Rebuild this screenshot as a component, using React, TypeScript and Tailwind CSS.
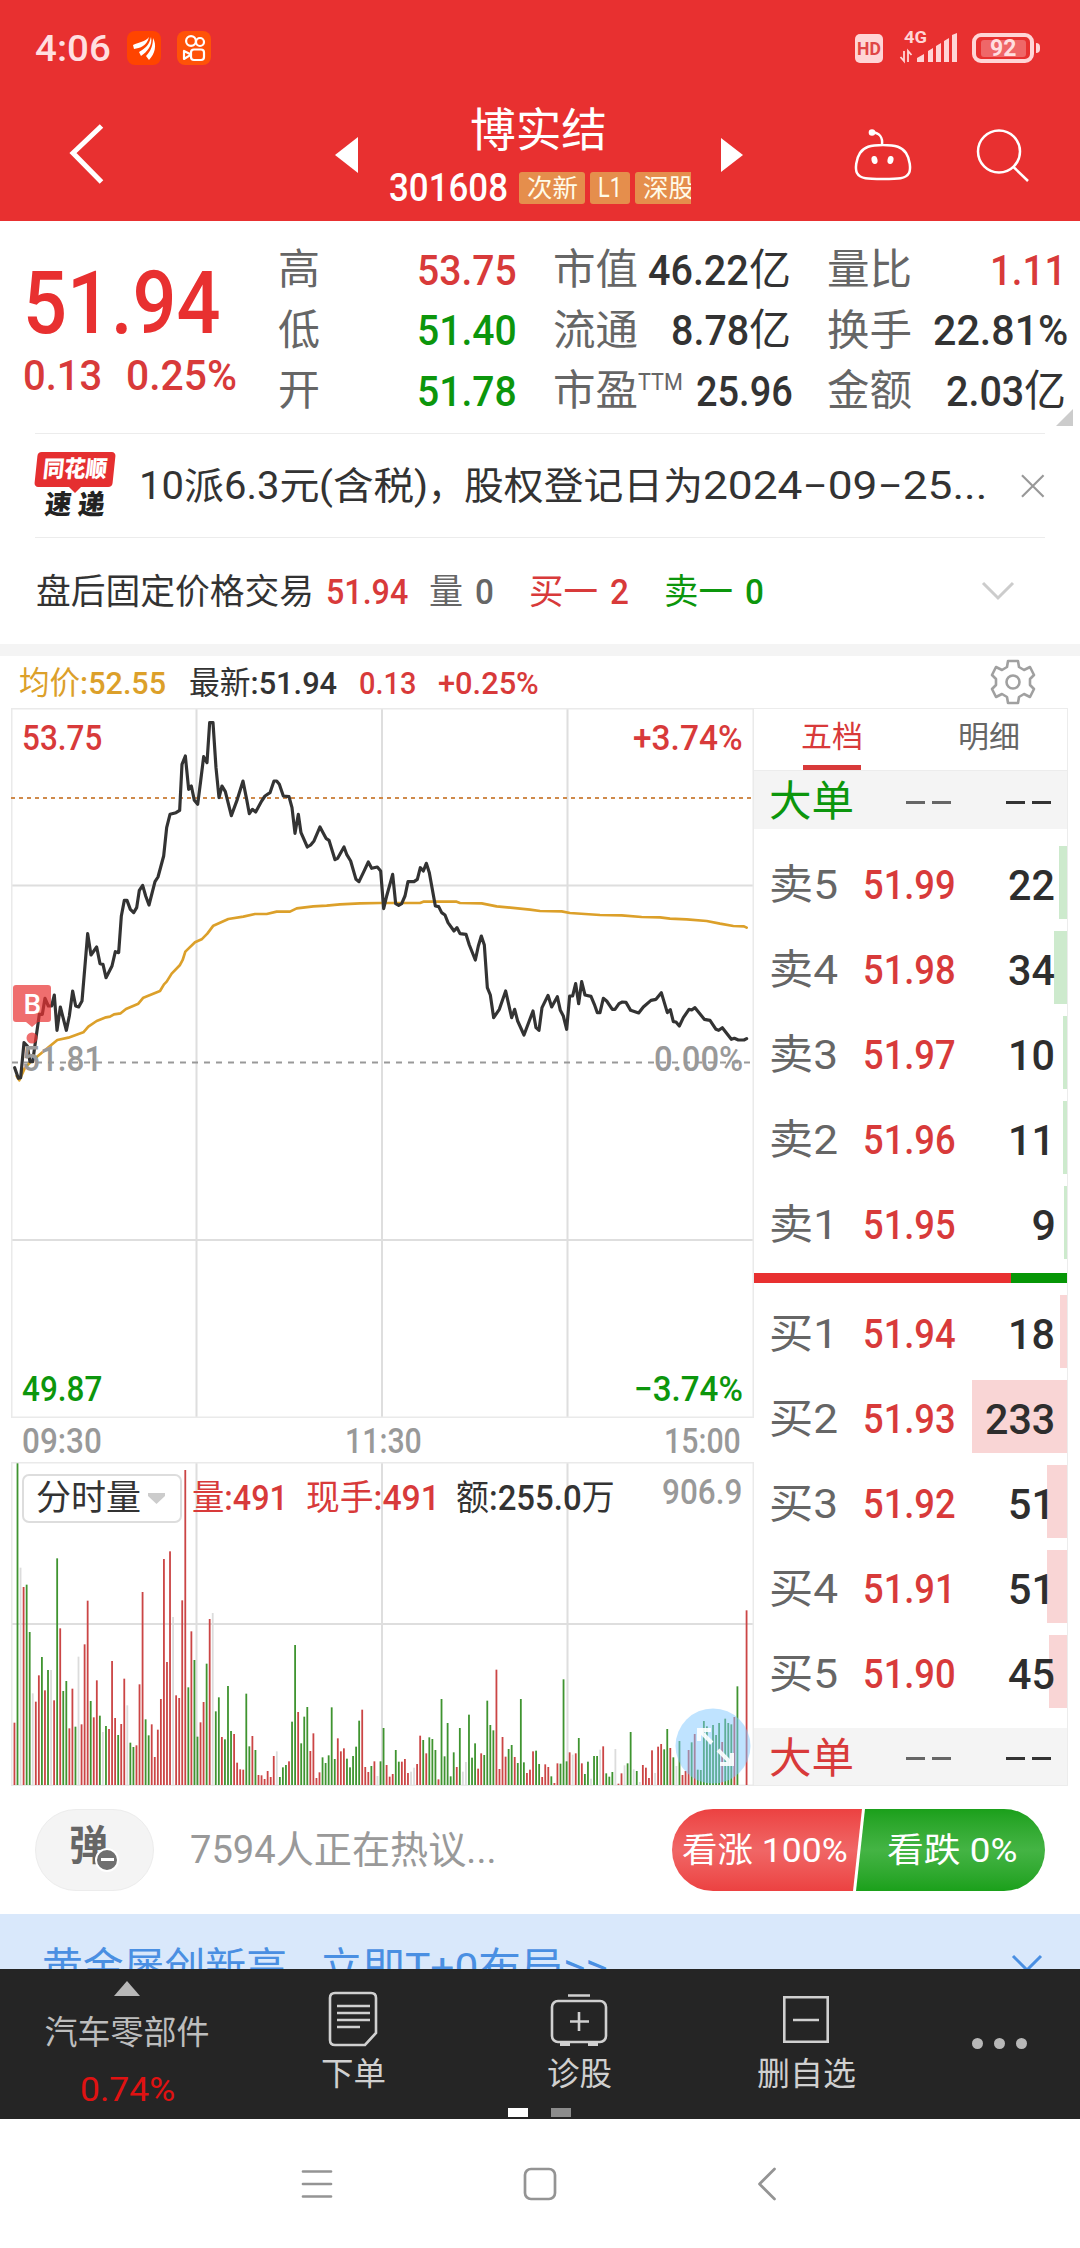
import { useLayoutEffect, useRef, type ReactNode } from 'react';

/* Text that is condensed or stretched to the width of its own box. */
function Fit({ className, children }: { className: string; children: ReactNode }) {
  const outer = useRef<HTMLSpanElement>(null);
  const inner = useRef<HTMLSpanElement>(null);
  useLayoutEffect(() => {
    if (!outer.current || !inner.current) return;
    inner.current.style.transform = `scaleX(${outer.current.clientWidth / inner.current.offsetWidth})`;
  }, []);
  return (
    <span ref={outer} className={`block shrink-0 whitespace-nowrap leading-none ${className}`}>
      <span ref={inner} className="inline-block origin-left">
        {children}
      </span>
    </span>
  );
}

function StatusBar() {
  return (
    <div className="flex h-24 items-center text-[#ffdfe0]">
      <Fit className="ml-[35px] w-[76px] text-[37px] font-medium">4:06</Fit>
      <svg className="ml-[16px]" width="34" height="34" viewBox="0 0 34 34">
        <rect width="34" height="34" rx="8" fill="#ff4400" />
        <g fill="#fff">
          <path d="M6 14C12 11 18 11 22 6C20 15 13 17 7 18Z" />
          <path d="M12 21C19 17 22 14 24 6C26 14 20 21 14 25Z" />
          <path d="M19 25C24 20 26 14 26 7C30 14 28 23 22 29Z" />
        </g>
      </svg>
      <svg className="ml-[16px]" width="34" height="34" viewBox="0 0 34 34" fill="none" stroke="#fff" strokeWidth="2.2">
        <rect width="34" height="34" rx="8" fill="#ff5208" stroke="none" />
        <circle cx="14" cy="10" r="4.9" />
        <circle cx="23" cy="11" r="4" />
        <rect x="14" y="18.5" width="13" height="10.5" rx="3" />
        <path d="M14 23.6L7 20V28Z" strokeLinejoin="round" />
      </svg>
      <span className="ml-[644px] flex h-[29px] w-7 items-center justify-center rounded-[5px] bg-[#ffd5d6]">
        <Fit className="w-6 text-[19px] font-bold text-[#e04545]">HD</Fit>
      </span>
      <svg className="ml-[16px] -mt-1" width="60" height="38" viewBox="0 -4 60 38" fill="#ffd5d6">
        <text x="5" y="12" fontFamily="Roboto" fontSize="16" fontWeight="700" textLength="23" lengthAdjust="spacingAndGlyphs">4G</text>
        <path d="M18 31V27L25 23V31ZM29 31V20L34 17V31ZM37 31V15L42 12V31ZM45 31V10L50 7V31ZM53 31V4L58 2V31Z" />
        <path d="M5 20V30L1.500 26M9 31V20L12.500 24" fill="none" stroke="#ffd5d6" strokeWidth="1.800" />
      </svg>
      <span className="ml-[13px] flex h-[30px] w-[62px] items-center justify-center rounded-[9px] border-4 border-[#ffd5d6]">
        <span className="flex h-[17px] w-[45px] items-center justify-center rounded-[3px] bg-[#ef6768]">
          <Fit className="w-[26px] text-[23px] font-bold">92</Fit>
        </span>
      </span>
      <span className="ml-[2px] h-[10px] w-1 rounded-r bg-[#ffd5d6]" />
    </div>
  );
}

function Header() {
  return (
    <header className="h-[221px] shrink-0 bg-[#e83030] text-white">
      <StatusBar />
      <div className="flex h-[114px] items-center">
        <svg className="ml-[68px]" width="38" height="62" viewBox="0 0 38 62" fill="none" stroke="#fff" strokeWidth="5">
          <path d="M33.500 4L5 31L33.500 60" />
        </svg>
        <svg className="ml-[229px] mt-1" width="23" height="36" viewBox="0 0 23 36">
          <path d="M23 0V36L0 18Z" fill="#fff" />
        </svg>
        <div className="ml-[31px] flex h-[122px] w-[302px] flex-col self-start">
          <div className="flex h-16 items-center justify-center pr-[3px] pt-[3px]">
            <Fit className="w-[137px] text-[46px]">博实结</Fit>
          </div>
          <div className="flex h-[56px] items-center overflow-hidden text-[25px] text-[#fffbe8]">
            <Fit className="w-[119px] text-[39px] font-medium text-white">301608</Fit>
            <span className="ml-[11px] flex h-8 w-[66px] shrink-0 items-center justify-center rounded-[3px] bg-[#e58e4c]">
              <Fit className="w-[51px]">次新</Fit>
            </span>
            <span className="ml-[5px] flex h-8 w-10 shrink-0 items-center justify-center rounded-[3px] bg-[#e58e4c]">
              <Fit className="w-[24px] text-[28px]">L1</Fit>
            </span>
            <span className="ml-[5px] flex h-8 w-[56px] shrink-0 items-center overflow-hidden rounded-l-[3px] bg-[#e58e4c] pl-[8px]">
              <Fit className="w-[51px]">深股</Fit>
            </span>
          </div>
        </div>
        <svg className="ml-[30px] mt-1" width="22" height="34" viewBox="0 0 22 34">
          <path d="M0 0V34L22 17Z" fill="#fff" />
        </svg>
        <svg className="ml-[110px] mt-1" width="60" height="56" viewBox="0 0 60 56" fill="none" stroke="#fff" strokeWidth="2.500">
          <path d="M30 18C43 18 49 20 53 26C57 32 58 42 56 46C53 52 45 52 30 52C15 52 7 52 4 46C2 42 3 32 7 26C11 20 17 18 30 18ZM29 18C30 9 26 6 19 5" />
          <circle cx="19" cy="5.500" r="3.300" fill="#fff" stroke="none" />
          <ellipse cx="21.500" cy="33" rx="3" ry="4" fill="#fff" stroke="none" transform="rotate(-12 21.500 33)" />
          <ellipse cx="37.500" cy="33" rx="3" ry="4" fill="#fff" stroke="none" transform="rotate(12 37.500 33)" />
        </svg>
        <svg className="ml-[63px] mt-1" width="54" height="56" viewBox="0 0 54 56" fill="none" stroke="#fff" strokeWidth="2.500">
          <circle cx="23" cy="24.500" r="21" />
          <path d="M37.500 40L52 54" />
        </svg>
      </div>
    </header>
  );
}

const ROW = 'flex h-[60.5px] items-center justify-between text-[43px]';
const LABEL2 = 'w-[85px] text-[42px] text-[#666]';

function Quote() {
  return (
    <section className="flex h-[212px] shrink-0 text-[#d83a3a]">
      <div className="w-[278px] shrink-0 pl-[23px] pt-[35px]">
        <div className="flex h-[94px] items-center">
          <Fit className="w-[198px] text-[88px] font-medium text-[#e83030]">51.94</Fit>
        </div>
        <div className="flex h-[50px] items-center gap-6 text-[43px]">
          <Fit className="w-[79px] font-medium">0.13</Fit>
          <Fit className="w-[111px] font-medium">0.25%</Fit>
        </div>
      </div>
      <div className="w-[239px] shrink-0 pt-[19px]">
        <div className={ROW}>
          <Fit className="w-[42px] text-[42px] text-[#666]">高</Fit>
          <Fit className="w-[100px] font-medium">53.75</Fit>
        </div>
        <div className={`${ROW} text-[#0c960c]`}>
          <Fit className="w-[42px] text-[42px] text-[#666]">低</Fit>
          <Fit className="w-[100px] font-medium">51.40</Fit>
        </div>
        <div className={`${ROW} text-[#0c960c]`}>
          <Fit className="w-[42px] text-[42px] text-[#666]">开</Fit>
          <Fit className="w-[100px] font-medium">51.78</Fit>
        </div>
      </div>
      <div className="ml-[36px] w-[240px] shrink-0 pt-[19px] text-[#333]">
        <div className={ROW}>
          <Fit className={LABEL2}>市值</Fit>
          <span className="flex pr-[2px]">
            <Fit className="w-[101px] font-medium">46.22</Fit>
            <Fit className="w-[42px]">亿</Fit>
          </span>
        </div>
        <div className={ROW}>
          <Fit className={LABEL2}>流通</Fit>
          <span className="flex pr-[2px]">
            <Fit className="w-[78px] font-medium">8.78</Fit>
            <Fit className="w-[42px]">亿</Fit>
          </span>
        </div>
        <div className={ROW}>
          <span className="flex">
            <Fit className={LABEL2}>市盈</Fit>
            <Fit className="w-[45px] text-[24px] text-[#666]">TTM</Fit>
          </span>
          <Fit className="w-[97px] font-medium">25.96</Fit>
        </div>
      </div>
      <div className="ml-[34px] w-[241px] shrink-0 pt-[19px] text-[#333]">
        <div className={ROW}>
          <Fit className={LABEL2}>量比</Fit>
          <Fit className="mr-[2px] w-[76px] font-medium text-[#d83a3a]">1.11</Fit>
        </div>
        <div className={ROW}>
          <Fit className={LABEL2}>换手</Fit>
          <Fit className="w-[135px] font-medium">22.81%</Fit>
        </div>
        <div className={ROW}>
          <Fit className={LABEL2}>金额</Fit>
          <span className="flex pr-[2px]">
            <Fit className="w-[78px] font-medium">2.03</Fit>
            <Fit className="w-[42px]">亿</Fit>
          </span>
        </div>
      </div>
      <svg className="-ml-[12px] mb-[7px] shrink-0 self-end" width="17" height="17" viewBox="0 0 17 17">
        <path d="M17 0V17H0Z" fill="#ccc" />
      </svg>
    </section>
  );
}

function Notice() {
  return (
    <section className="mx-[35px] flex h-[105px] shrink-0 items-center border-y border-[#ececec]">
      <div className="flex h-[68px] w-[82px] flex-col items-center">
        <div className="flex h-[35px] w-[78px] -skew-x-6 items-center justify-center rounded-[4px] bg-[#e52f30]">
          <Fit className="w-[64px] text-[23px] font-black text-white">同花顺</Fit>
        </div>
        <svg width="12" height="6" viewBox="0 0 12 6">
          <path d="M0 0H12L6 6Z" fill="#e52f30" />
        </svg>
        <div className="-mt-[1px] -skew-x-6">
          <Fit className="w-[60px] text-[27px] font-black text-[#222]">速 递</Fit>
        </div>
      </div>
      <div className="flex text-[38px] text-[#333]">
        <Fit className="ml-[24px] w-[180px]">10派6.3元</Fit>
        <Fit className="w-[109px]">(含税)</Fit>
        <Fit className="w-[36px]">，</Fit>
        <Fit className="w-[239px]">股权登记日为</Fit>
        <Fit className="w-[284px]">2024−09−25...</Fit>
      </div>
      <svg className="ml-[34px]" width="24" height="24" viewBox="0 0 24 24" stroke="#999" strokeWidth="2.200">
        <path d="M1 1L23 23M23 1L1 23" />
      </svg>
    </section>
  );
}

function FixedPrice() {
  return (
    <section className="flex h-[106px] shrink-0 items-center pl-[36px] pt-[2px] text-[35px] text-[#333]">
      <Fit className="w-[278px]">盘后固定价格交易</Fit>
      <Fit className="ml-[12px] w-[82px] font-medium text-[#d83a3a]">51.94</Fit>
      <Fit className="ml-[21px] w-[34px] text-[#666]">量</Fit>
      <Fit className="ml-[12px] w-[19px] font-medium text-[#666]">0</Fit>
      <Fit className="ml-[35px] w-[69px] text-[#d83a3a]">买一</Fit>
      <Fit className="ml-[12px] w-[19px] font-medium text-[#d83a3a]">2</Fit>
      <Fit className="ml-[35px] w-[69px] text-[#0c960c]">卖一</Fit>
      <Fit className="ml-[12px] w-[19px] font-medium text-[#0c960c]">0</Fit>
      <svg className="-mt-[2px] ml-[217px]" width="34" height="20" viewBox="0 0 34 20" fill="none" stroke="#ccc" strokeWidth="3">
        <path d="M2 2L17 17L32 2" />
      </svg>
    </section>
  );
}

function InfoRow() {
  return (
    <section className="flex h-[52px] shrink-0 items-center pl-[19px] pt-[2px] text-[32px] text-[#333]">
      <Fit className="w-[147px] text-[#dca02a]">
        均价<span className="font-medium">:52.55</span>
      </Fit>
      <Fit className="ml-[23px] w-[148px]">
        最新<span className="font-medium">:51.94</span>
      </Fit>
      <Fit className="ml-[22px] w-[57px] font-medium text-[#d83a3a]">0.13</Fit>
      <Fit className="ml-[22px] w-[101px] font-medium text-[#d83a3a]">+0.25%</Fit>
      <svg className="-mt-[2px] ml-[451px]" width="46" height="46" viewBox="0 0 46 46" fill="none" stroke="#a0a0a0" strokeWidth="2.600" strokeLinejoin="round">
        <path d="M18 2H28L29 8L34 11L40 8L44 16L40 20V26L44 30L40 38L34 35L29 38L28 44H18L17 38L12 35L6 38L2 30L6 26V20L2 16L6 8L12 11L17 8Z" />
        <circle cx="23" cy="23" r="6.500" />
      </svg>
    </section>
  );
}

/* Chart points are in thirds of a pixel. */
const PRICE_A =
  '44,1280 55,1312 62,1310 72,1205 82,1215 90,1262 98,1262 108,1190 118,1120 127,1120 135,1072 145,1095 155,1095 163,1062 171,1168 181,1098 199,1168 208,1125 218,1050 227,1095 236,1098 246,1080 254,985 263,878 273,942 290,918 300,968 309,970 318,1010 336,975 346,932 356,935 364,825 373,778 381,778 391,805 401,815 410,800 418,748 428,733 437,765 447,792 465,722 474,708 491,645 500,560 510,520 528,515 539,508 546,370 556,345 566,445 574,435 583,478 593,490 602,420 611,347 621,365 629,245 639,245 648,380 657,470 666,435 676,452 694,524 712,475 729,420 740,475 748,518 757,505 767,513 785,480 795,465 810,455 822,420 830,420 838,430 850,465 867,467 876,500 885,577 895,520 903,575 922,618 932,612 942,600 960,558 978,592 987,598 1005,656 1013,652 1032,618 1040,640 1052,660 1068,715 1077,722 1090,695 1105,663';
const PRICE_B =
  '5,682 22,678 32,690 41,803 50,765 68,700 77,788 86,793 95,788 105,765 114,722 132,722 142,715 151,680 160,690 169,667 178,695 196,795 206,797 215,815 225,822 234,845 252,870 261,860 270,878 288,880 298,912 316,957 325,915 334,885 343,912 352,1040 361,1062 371,1130 388,1105 407,1050 425,1130 434,1105 443,1140 462,1182 489,1110 498,1160 507,1168 516,1100 534,1063 545,1098 562,1067 571,1108 580,1125 590,1165 599,1065 608,1065 617,1028 626,1088 635,1022 645,1062 663,1066 673,1090 682,1115 690,1115 700,1072 710,1080 727,1105 735,1105 747,1088 757,1083 768,1084 782,1108 806,1116 820,1098 843,1078 858,1075 874,1055 892,1115 901,1106 910,1142 918,1143 928,1155 940,1130 957,1105 965,1107 975,1100 1003,1135 1020,1138 1038,1165 1046,1168 1057,1160 1084,1195 1093,1192 1105,1197 1122,1197 1130,1193';
const AVG_A =
  '50,1305 58,1318 75,1280 95,1260 120,1240 150,1215 172,1197 205,1190 250,1174 265,1157 290,1140 318,1129 330,1127 342,1120 362,1117 378,1104 415,1088 430,1070 480,1050 492,1030 500,1022 515,998 540,972 548,957 556,932 585,904 605,895 622,878 640,854 685,834 730,827 765,819 800,819 830,812 870,812 890,802 940,796 980,794 1020,790 1080,787';
const AVG_B =
  '30,786 150,786 160,782 260,782 270,786 335,787 380,796 480,806 510,810 575,811 600,816 690,822 755,823 815,828 870,829 900,833 950,835 1010,840 1050,848 1090,855 1122,856 1130,860';

const shift = (s: string) =>
  s
    .split(' ')
    .map((p) => p.split(',').map(Number))
    .map(([x, y]) => `${x + 1110},${y}`)
    .join(' ');

function Grid({ h, rows }: { h: number; rows: number[] }) {
  return (
    <g stroke="#dedede" strokeWidth="2">
      {[185.5, 371, 556.5].map((x) => (
        <line key={x} x1={x} x2={x} y1="0" y2={h} />
      ))}
      {rows.map((y) => (
        <line key={y} x1="0" x2="743" y1={y} y2={y} />
      ))}
      <rect x="0.500" y="0.500" width="742" height={h - 1} fill="none" stroke="#eaeaea" />
    </g>
  );
}

function PriceChart() {
  return (
    <div className="relative h-[710px] text-[35px] font-medium">
      <svg className="block" width="743" height="710" viewBox="0 0 743 710" fill="none" strokeLinejoin="round" strokeLinecap="round">
        <Grid h={710} rows={[177.5, 532]} />
        <path d="M0 90H743" stroke="#cf8a4b" strokeWidth="2" strokeDasharray="4 4" strokeLinecap="butt" />
        <path d="M1 354.500H743" stroke="#999" strokeWidth="2" strokeDasharray="6 6" strokeLinecap="butt" />
        <g transform="translate(-11 -67) scale(0.33333)">
          <polyline points={`${AVG_A} ${shift(AVG_B)}`} stroke="#dca02a" strokeWidth="8" />
          <polyline points={`${PRICE_A} ${shift(PRICE_B)}`} stroke="#333" strokeWidth="9.500" />
        </g>
        <g fill="#e83030" fillOpacity="0.7">
          <path d="M5 277H37Q40 277 40 280V311Q40 314 37 314H27L21 319L15 314H5Q2 314 2 311V280Q2 277 5 277Z" />
          <circle cx="21" cy="330" r="5.500" />
        </g>
        <text x="12.500" y="305.500" fontFamily="Roboto" fontSize="28" fill="#fff">B</text>
      </svg>
      <div className="absolute left-[11px] top-[13px] text-[#d83a3a]">
        <Fit className="w-[80px]">53.75</Fit>
      </div>
      <div className="absolute left-[622px] top-[13px] text-[#d83a3a]">
        <Fit className="w-[110px]">+3.74%</Fit>
      </div>
      <div className="absolute left-[11px] top-[334px] text-[#999]">
        <Fit className="w-[80px]">51.81</Fit>
      </div>
      <div className="absolute left-[643px] top-[334px] text-[#999]">
        <Fit className="w-[89px]">0.00%</Fit>
      </div>
      <div className="absolute left-[11px] top-[664px] text-[#0c960c]">
        <Fit className="w-[80px]">49.87</Fit>
      </div>
      <div className="absolute left-[623px] top-[664px] text-[#0c960c]">
        <Fit className="w-[109px]">−3.74%</Fit>
      </div>
    </div>
  );
}

/* One minute per entry: colour letter, then the bar's top in thirds of a pixel. */
const VOLUME =
  'r1055 g277 w590 r648 g641 g783 w967 r992 r913 g858 r958 g897 w897 r988 g562 r772 g960 g930 r1072 r953 g1067 w857 r1060 r820 r689 g990 r1039 r928 g1034 w1083 g1065 r1074 r870 r1041 g1092 r1059 r923 w1003 g1115 g1128 r1123 r940 r663 g1045 g1093 r1060 r1158 r1076 r984 r564 r873 r541 w738 r973 r981 r688 r297 g949 r781 g867 g1097 r1054 r993 g878 r744 w726 g1021 g979 r1098 g1105 g945 g1080 r1089 r1175 r1195 r1196 g968 g1126 r1095 g1137 r1212 r1213 r1224 r1200 r1218 r1155 w1141 g1218 g1189 g1182 r1171 g1052 g822 r1023 g1117 g1037 g1008 r1140 r1087 r1221 r1204 g1159 g1176 g1153 g1009 g1164 r1102 r1141 r1132 g1163 g1189 g1155 g1127 g1049 r1016 r1188 r1203 g1185 r1171 w1215 g1171 g1071 r1182 r1217 r1209 g1137 g1172 r1172 r1164 r1206 w1202 w1190 r1179 r1094 g1107 r1147 g1099 g1104 g1137 r1225 g984 g1156 g1056 g1216 g1144 r1188 g1071 w1202 w1173 g1031 g1160 g1117 r1193 r1147 g1152 g989 g1062 g1078 r896 r1194 r1098 r1157 g1134 g1122 r1158 g1176 g984 g1174 r1206 r1196 r1141 g1139 g1179 r1218 r1180 r1188 g1216 r1236 r1177 g1178 g925 g1171 r1144 w1151 r1147 g1101 r1177 g1209 g1172 w1223 g1155 g1155 w1136 r1126 g1207 g1217 g1203 w1134 r1238 r1207 w1183 g1177 g1083 w1195 g1200 w1233 r1182 r1190 r1221 r1138 w1206 r1127 r1119 g1135 g1074 r1131 g1159 w1185 g1110 r1212 r1200 r1137 g1114 r1089 g1196 g1197 g1050 g1066 g1120 g1062 g1092 g1056 r1113 g1043 g1056 g1060 r1038 g946 w1242 w1242 r718'.split(
    ' ',
  );
const BAR: Record<string, string> = { r: '#cb4545', g: '#3f9430', w: '#dcdcdc' };

function VolumeChart() {
  return (
    <div className="relative h-[324px] text-[35px]">
      <svg className="block" width="743" height="324" viewBox="0 0 743 324">
        <Grid h={324} rows={[162]} />
        {VOLUME.map((v, i) => {
          const h = (1242 - Number(v.slice(1))) / 3;
          return <rect key={i} x={2.55 + i * 3.0505} y={323 - h} width="1.8" height={h} fill={BAR[v[0]]} />;
        })}
        <circle cx="702" cy="284" r="37.500" fill="#80c8ff" fillOpacity="0.5" />
        <path d="M688 279V268H700M688 268L701 281M707 288L720 301M709 302H721V291" fill="none" stroke="#fff" strokeOpacity="0.9" strokeWidth="4" />
      </svg>
      <div className="absolute left-[11px] top-[12px] flex h-[49px] w-[160px] items-center rounded-[7px] border-2 border-[#ddd] bg-white pl-[12px] text-[#333]">
        <Fit className="w-[105px]">分时量</Fit>
        <svg className="ml-[7px]" width="17" height="11" viewBox="0 0 17 11">
          <path d="M0 0H17V3L8.500 11L0 3Z" fill="#ccc" />
        </svg>
      </div>
      <div className="absolute left-[181px] top-[19px] flex text-[#d83a3a]">
        <Fit className="w-[96px]">
          量<span className="font-medium">:491</span>
        </Fit>
        <Fit className="ml-[18px] w-[134px]">
          现手<span className="font-medium">:491</span>
        </Fit>
        <Fit className="ml-[16px] w-[159px] text-[#333]">
          额<span className="font-medium">:255.0</span>万
        </Fit>
      </div>
      <div className="absolute left-[651px] top-[13px] text-[#999]">
        <Fit className="w-[80px] font-medium">906.9</Fit>
      </div>
    </div>
  );
}

type Level = { name: string; price: string; qty: string; bar: string; w: string };
const SELL: Level[] = [
  { name: '卖5', price: '51.99', qty: '22', bar: 'w-[8px]', w: 'w-[47px]' },
  { name: '卖4', price: '51.98', qty: '34', bar: 'w-[13px]', w: 'w-[47px]' },
  { name: '卖3', price: '51.97', qty: '10', bar: 'w-[4px]', w: 'w-[47px]' },
  { name: '卖2', price: '51.96', qty: '11', bar: 'w-[4px]', w: 'w-[47px]' },
  { name: '卖1', price: '51.95', qty: '9', bar: 'w-[3px]', w: 'w-[23.5px]' },
];
const BUY: Level[] = [
  { name: '买1', price: '51.94', qty: '18', bar: 'w-[7px]', w: 'w-[47px]' },
  { name: '买2', price: '51.93', qty: '233', bar: 'w-[95px]', w: 'w-[70px]' },
  { name: '买3', price: '51.92', qty: '51', bar: 'w-[20px]', w: 'w-[47px]' },
  { name: '买4', price: '51.91', qty: '51', bar: 'w-[20px]', w: 'w-[47px]' },
  { name: '买5', price: '51.90', qty: '45', bar: 'w-[18px]', w: 'w-[47px]' },
];

function LevelRow({ l, tone }: { l: Level; tone: string }) {
  return (
    <div className="relative flex h-[85px] items-center pl-[15px] pt-[5px]">
      <div className={`absolute right-0 top-[6px] h-[73px] ${l.bar} ${tone}`} />
      <Fit className="relative w-[69px] text-[41px] text-[#666]">{l.name}</Fit>
      <Fit className="relative ml-[25px] w-[93px] text-[41px] font-medium text-[#d83a3a]">{l.price}</Fit>
      <span className="relative ml-auto mr-[12px]">
        <Fit className={`${l.w} text-[43px] font-medium text-[#2e2e2e]`}>{l.qty}</Fit>
      </span>
    </div>
  );
}

function BigOrder({ className }: { className: string }) {
  return (
    <div className={`flex items-center bg-[#f4f4f4] pl-[15px] ${className}`}>
      <Fit className="w-[85px] text-[42px]">大单</Fit>
      <span className="ml-[52px] h-[3px] w-[19px] bg-[#666]" />
      <span className="ml-[7px] h-[3px] w-[19px] bg-[#666]" />
      <span className="ml-[55px] h-[3px] w-[19px] bg-[#333]" />
      <span className="ml-[7px] h-[3px] w-[19px] bg-[#333]" />
    </div>
  );
}

function OrderBook() {
  return (
    <div className="flex h-[1078px] w-[314px] flex-col border border-l-0 border-[#ececec]">
      <div className="flex h-[61px] text-[30px] text-[#666]">
        <div className="ml-[47px] flex w-[62px] flex-col justify-between text-[#d83a3a]">
          <Fit className="mt-[13px] w-[62px]">五档</Fit>
          <span className="mx-[2px] h-[5px] bg-[#d83a3a]" />
        </div>
        <Fit className="ml-[95px] mt-[13px] w-[62px]">明细</Fit>
      </div>
      <BigOrder className="h-[59px] border-t border-[#ececec] pt-1 text-[#0c960c]" />
      <div className="mt-[11px]">
        {SELL.map((l) => (
          <LevelRow key={l.name} l={l} tone="bg-[#cdeacd]" />
        ))}
      </div>
      <div className="mt-[8px] flex h-[10px] shrink-0">
        <div className="w-[257px] bg-[#e83030]" />
        <div className="flex-1 bg-[#069606]" />
      </div>
      <div className="mt-[6px]">
        {BUY.map((l) => (
          <LevelRow key={l.name} l={l} tone="bg-[#f9d5d5]" />
        ))}
      </div>
      <BigOrder className="mt-auto h-[57px] pt-1 text-[#d83a3a]" />
    </div>
  );
}

function Discuss() {
  return (
    <section className="flex h-[128px] shrink-0 items-center">
      <div className="ml-[35px] flex h-[82px] w-[119px] items-center rounded-full border border-[#ececec] bg-[#f4f4f4] pl-[33px]">
        <div className="relative -mt-2">
          <Fit className="w-[39px] text-[41px] font-bold text-[#666]">弹</Fit>
          <span className="absolute left-[26px] top-[22px] flex size-[24px] items-center justify-center rounded-full border-2 border-white bg-[#707070]">
            <span className="h-[3px] w-[13px] bg-white" />
          </span>
        </div>
      </div>
      <Fit className="ml-[36px] w-[307px] text-[38px] text-[#999]">7594人正在热议...</Fit>
      <div className="ml-[175px] flex h-[82px] w-[373px] items-center overflow-hidden rounded-[41px] text-[34px] text-white">
        <div className="flex h-full w-[193px] items-center bg-linear-to-b from-[#ec4141] via-[#f06666] to-[#ec4141] pl-[10px] [clip-path:polygon(0_0,190px_0,181px_100%,0_100%)]">
          <Fit className="w-[166px]">看涨 100%</Fit>
        </div>
        <div className="-ml-[9px] flex h-full flex-1 items-center bg-linear-to-b from-[#1aa01a] via-[#44b444] to-[#1aa01a] pl-[31px] [clip-path:polygon(9px_0,100%_0,100%_100%,0_100%)]">
          <Fit className="w-[130px]">看跌 0%</Fit>
        </div>
      </div>
    </section>
  );
}

function Banner() {
  return (
    <section className="flex h-[55px] shrink-0 items-start overflow-hidden bg-[#d9e8fb] text-[41px] text-[#4a8fe2]">
      <Fit className="ml-[42px] mt-[34px] w-[245px]">黄金屡创新高</Fit>
      <Fit className="mt-[34px] w-[33px]">，</Fit>
      <Fit className="mt-[34px] w-[288px]">立即T+0布局&gt;&gt;</Fit>
      <svg className="ml-[403px] mt-[40px] shrink-0" width="32" height="32" viewBox="0 0 32 32" stroke="#4a8fe2" strokeWidth="3">
        <path d="M2 2L30 30M30 2L2 30" />
      </svg>
    </section>
  );
}

function Toolbar() {
  return (
    <nav className="flex h-[150px] shrink-0 bg-[#252525] text-[32px] text-[#d0d0d0]">
      <div className="flex w-[254px] flex-col items-center pt-[12px]">
        <svg width="26" height="15" viewBox="0 0 26 15">
          <path d="M13 0L26 15H0Z" fill="#b8b8b8" />
        </svg>
        <Fit className="mt-[20px] w-[165px] text-[33px] text-[#bdbdbd]">汽车零部件</Fit>
        <Fit className="mt-[23px] w-[95px] text-[34px] text-[#e01212]">0.74%</Fit>
      </div>
      <div className="flex w-[198px] flex-col items-center pt-[22px]">
        <svg width="50" height="56" viewBox="0 0 50 56" fill="none" stroke="#d0d0d0" strokeWidth="2.600">
          <path d="M7 2H43Q48 2 48 7V42L37 54H7Q2 54 2 49V7Q2 2 7 2ZM9 15H42M9 22H42M9 29H42M9 36H32" />
        </svg>
        <Fit className="mt-[11px] w-[65px]">下单</Fit>
      </div>
      <div className="flex w-[254px] flex-col items-center pt-[24px]">
        <svg width="58" height="54" viewBox="0 0 58 54" fill="none" stroke="#d0d0d0" strokeWidth="2.600">
          <rect x="2" y="8" width="54" height="41" rx="6" />
          <path d="M18 2.500H40M20 28.500H39M29 19V38" />
          <path d="M10 51H20M38 51H48" strokeWidth="4" />
        </svg>
        <Fit className="mt-[11px] w-[65px]">诊股</Fit>
        <div className="mt-[18px] flex w-[254px] pl-[56px]">
          <span className="h-[9px] w-[20px] bg-white" />
          <span className="ml-[23px] h-[9px] w-[20px] bg-[#8c8c8c]" />
        </div>
      </div>
      <div className="flex w-[200px] flex-col items-center pt-[27px]">
        <svg width="46" height="47" viewBox="0 0 46 47" fill="none" stroke="#d0d0d0" strokeWidth="2.600">
          <path d="M1.300 1.300H44.700V45.700H1.300ZM10 24H36" />
        </svg>
        <Fit className="mt-[15px] w-[99px]">删自选</Fit>
      </div>
      <div className="flex flex-1 gap-[11px] pl-[66px] pt-[69px]">
        <span className="size-[11px] rounded-full bg-[#b8b8b8]" />
        <span className="size-[11px] rounded-full bg-[#b8b8b8]" />
        <span className="size-[11px] rounded-full bg-[#b8b8b8]" />
      </div>
    </nav>
  );
}

function SystemNav() {
  return (
    <div className="flex h-[130px] items-center">
      <svg className="ml-[301px]" width="32" height="32" viewBox="0 0 32 32" stroke="#949494" strokeWidth="2.700" strokeLinecap="round">
        <path d="M2 3.500H30M2 16H30M2 28.500H30" />
      </svg>
      <svg className="ml-[190px]" width="34" height="34" viewBox="0 0 34 34" fill="none" stroke="#949494" strokeWidth="2.700">
        <rect x="2" y="2" width="30" height="30" rx="6" />
      </svg>
      <svg className="ml-[200px]" width="20" height="34" viewBox="0 0 20 34" fill="none" stroke="#949494" strokeWidth="2.700" strokeLinecap="round" strokeLinejoin="round">
        <path d="M17.500 2L2.500 17L17.500 32" />
      </svg>
    </div>
  );
}

export default function App() {
  return (
    <div className="flex h-[2248px] w-[1080px] flex-col overflow-hidden bg-white font-['Roboto','Noto_Sans_CJK_SC',sans-serif]">
      <Header />
      <Quote />
      <Notice />
      <FixedPrice />
      <div className="h-[12px] shrink-0 bg-[#f4f4f4]" />
      <InfoRow />
      <section className="flex h-[1078px] shrink-0">
        <div className="ml-[11px] w-[743px]">
          <PriceChart />
          <div className="flex h-[44px] items-center pt-[2px] text-[35px] font-medium text-[#999]">
            <Fit className="ml-[11px] w-[80px]">09:30</Fit>
            <Fit className="ml-[243px] w-[77px]">11:30</Fit>
            <Fit className="ml-[242px] w-[77px]">15:00</Fit>
          </div>
          <VolumeChart />
        </div>
        <OrderBook />
      </section>
      <Discuss />
      <Banner />
      <Toolbar />
      <SystemNav />
    </div>
  );
}
